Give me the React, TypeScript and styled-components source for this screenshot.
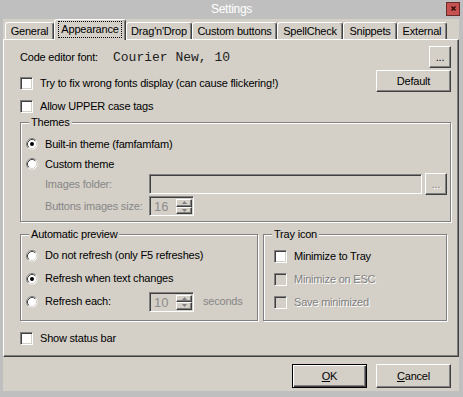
import React from "react";
import styled, { createGlobalStyle, css } from "styled-components";

const GlobalStyle = createGlobalStyle`
  *, *::before, *::after { box-sizing: border-box; }
  html, body { margin: 0; padding: 0; background: #bfbfbf; }
  body {
    font-family: "Liberation Sans", Arial, sans-serif;
    font-size: 11px;
    letter-spacing: -0.2px;
    color: #000;
  }
`;

const face = "#d4d0c8";

const raised = css`
  border: 1px solid;
  border-color: #fff #404040 #404040 #fff;
  box-shadow: inset -1px -1px #808080;
`;

const sunken = css`
  border: 1px solid;
  border-color: #808080 #fff #fff #808080;
  box-shadow: inset 1px 1px #404040, inset -1px -1px ${face};
`;

const tabs = [
  { label: "General", width: 49 },
  { label: "Appearance", width: 72, active: true },
  { label: "Drag'n'Drop", width: 66 },
  { label: "Custom buttons", width: 85 },
  { label: "SpellCheck", width: 66 },
  { label: "Snippets", width: 54 },
  { label: "External", width: 50 },
];

const CheckBox: React.FC<{ disabled?: boolean }> = ({ disabled }) => (
  <CheckBoxBox $disabled={disabled} />
);

const Radio: React.FC<{ checked?: boolean }> = ({ checked }) => (
  <svg width="12" height="12" viewBox="0 0 12 12">
    <circle cx="6" cy="6" r="5.5" fill="#fff" />
    <path d="M2.11 9.89 A5.5 5.5 0 0 1 9.89 2.11" fill="none" stroke="#808080" />
    <path d="M2.82 9.18 A4.5 4.5 0 0 1 9.18 2.82" fill="none" stroke="#404040" />
    <path d="M9.18 2.82 A4.5 4.5 0 0 1 2.82 9.18" fill="none" stroke={face} />
    {checked && <circle cx="6" cy="6" r="2" fill="#000" />}
  </svg>
);

type OptionProps = {
  kind: "check" | "radio";
  label: string;
  checked?: boolean;
  disabled?: boolean;
  height?: number;
  offset?: number;
};

const Option: React.FC<OptionProps> = ({ kind, label, checked, disabled, height, offset }) => (
  <OptionRow $h={height ?? 17} $offset={offset ?? 0}>
    {kind === "check" ? <CheckBox disabled={disabled} /> : <Radio checked={checked} />}
    <OptionText $disabled={disabled}>{label}</OptionText>
  </OptionRow>
);

const Arrow: React.FC<{ up?: boolean }> = ({ up }) => (
  <svg width="5" height="3" viewBox="0 0 5 3">
    <polygon points={up ? "2.5,0 5,3 0,3" : "0,0 5,0 2.5,3"} fill="#808080" />
  </svg>
);

const SpinBox: React.FC<{ value: string }> = ({ value }) => (
  <Spin>
    <SpinValue>{value}</SpinValue>
    <SpinButtons>
      <SpinButton>
        <Arrow up />
      </SpinButton>
      <SpinButton>
        <Arrow />
      </SpinButton>
    </SpinButtons>
  </Spin>
);

const App: React.FC = () => {
  return (
    <>
      <GlobalStyle />
      <Window>
        <TitleBar>
          <span />
          <Title>Settings</Title>
          <CloseButton>
            <svg width="5" height="5" viewBox="0 0 5 5">
              <path d="M0.5 0.5 L4.5 4.5 M4.5 0.5 L0.5 4.5" stroke="#2a0a0a" strokeWidth="1.3" />
            </svg>
          </CloseButton>
        </TitleBar>

        <Client>
          <TabRow>
            {tabs.map((tab) => (
              <Tab key={tab.label} $width={tab.width} $active={tab.active}>
                {tab.active ? <FocusLabel>{tab.label}</FocusLabel> : tab.label}
              </Tab>
            ))}
          </TabRow>

          <Panel>
            <FontRow>
              <FontLabel>Code editor font:</FontLabel>
              <FontName>Courier New, 10</FontName>
              <Spacer />
              <Button $w={22} $h={22}>...</Button>
            </FontRow>

            <DefaultRow>
              <Option kind="check" label="Try to fix wrong fonts display (can cause flickering!)" offset={4} />
              <Button $w={75} $h={22}>Default</Button>
            </DefaultRow>

            <Stack $top={6}>
              <Option kind="check" label="Allow UPPER case tags" />
            </Stack>

            <Group $top={1}>
              <Legend>Themes</Legend>
              <GroupBody $pad="5px 3px 5px 5px">
                <Option kind="radio" label="Built-in theme (famfamfam)" checked height={20} />
                <Option kind="radio" label="Custom theme" height={20} />
                <FieldRow>
                  <FieldLabel>Images folder:</FieldLabel>
                  <TextBox />
                  <Button $w={22} $h={22} $disabled>...</Button>
                </FieldRow>
                <FieldRow $top={2}>
                  <FieldLabel>Buttons images size:</FieldLabel>
                  <SpinBox value="16" />
                </FieldRow>
              </GroupBody>
            </Group>

            <Columns>
              <Group $width={238}>
                <Legend>Automatic preview</Legend>
                <GroupBody $pad="3px 3px 7px 5px">
                  <Option kind="radio" label="Do not refresh (only F5 refreshes)" height={23} />
                  <Option kind="radio" label="Refresh when text changes" checked height={23} />
                  <FieldRow $h={23} $indent={0}>
                    <RadioLabel>
                      <Radio />
                      <OptionText>Refresh each:</OptionText>
                    </RadioLabel>
                    <SpinBox value="10" />
                    <Units>seconds</Units>
                  </FieldRow>
                </GroupBody>
              </Group>

              <Group $grow>
                <Legend>Tray icon</Legend>
                <GroupBody $pad="4px 3px 6px 10px">
                  <Option kind="check" label="Minimize to Tray" height={23} />
                  <Option kind="check" label="Minimize on ESC" disabled height={23} />
                  <Option kind="check" label="Save minimized" disabled height={23} />
                </GroupBody>
              </Group>
            </Columns>

            <Stack $top={9}>
              <Option kind="check" label="Show status bar" />
            </Stack>
          </Panel>

          <Footer>
            <Button $w={75} $h={24} $default>
              <u>O</u>K
            </Button>
            <Button $w={75} $h={24}>
              <u>C</u>ancel
            </Button>
          </Footer>
        </Client>
      </Window>
    </>
  );
};

export default App;

const Window = styled.div`
  width: 463px;
  height: 397px;
  background: #bfbfbf;
  display: flex;
  flex-direction: column;
  overflow: hidden;
`;

const TitleBar = styled.div`
  height: 19px;
  display: grid;
  grid-template-columns: 1fr auto 1fr;
  align-items: center;
`;

const Title = styled.span`
  color: #fff;
  font-size: 12px;
  letter-spacing: -0.3px;
  line-height: 14px;
  padding-bottom: 2px;
`;

const CloseButton = styled.div`
  justify-self: end;
  margin-right: 3px;
  margin-bottom: 2px;
  width: 14px;
  height: 14px;
  background: #c75050;
  border: 1px solid #6a2b2b;
  display: flex;
  align-items: center;
  justify-content: center;
`;

const Client = styled.div`
  flex: 1;
  margin: 0 4px 6px 3px;
  background: ${face};
  display: flex;
  flex-direction: column;
`;

const TabRow = styled.div`
  height: 20px;
  display: flex;
  align-items: flex-end;
  padding-left: 2px;
`;

const Tab = styled.div<{ $width: number; $active?: boolean }>`
  width: ${({ $width }) => $width}px;
  height: ${({ $active }) => ($active ? 21 : 17)}px;
  margin-bottom: ${({ $active }) => ($active ? -1 : 0)}px;
  position: relative;
  z-index: ${({ $active }) => ($active ? 2 : 1)};
  background: ${face};
  border: 1px solid;
  border-bottom: none;
  border-color: #fff #404040 transparent #fff;
  border-radius: 3px 3px 0 0;
  box-shadow: inset -1px 0 #808080;
  display: flex;
  align-items: ${({ $active }) => ($active ? "flex-start" : "center")};
  justify-content: center;
  padding-top: ${({ $active }) => ($active ? 2 : 1)}px;
  line-height: 13px;
  white-space: nowrap;
`;

const FocusLabel = styled.span`
  outline: 1px dotted #000;
  padding: 1px 2px;
`;

const Panel = styled.div`
  flex: 1;
  display: flex;
  flex-direction: column;
  border: 1px solid;
  border-color: #fff #404040 #404040 #fff;
  box-shadow: inset -1px -1px #808080;
  padding: 6px 7px 0 16px;
`;

const FontRow = styled.div`
  height: 22px;
  display: flex;
  align-items: center;
`;

const FontLabel = styled.span`
  width: 93px;
  line-height: 13px;
`;

const FontName = styled.span`
  font-family: "Liberation Mono", "Courier New", monospace;
  font-size: 13px;
  letter-spacing: 0;
  line-height: 15px;
  padding-top: 1px;
  color: #202020;
`;

const Spacer = styled.div`
  flex: 1;
`;

const DefaultRow = styled.div`
  height: 22px;
  margin-top: 2px;
  display: flex;
  align-items: center;
  justify-content: space-between;
`;

const Stack = styled.div<{ $top: number }>`
  margin-top: ${({ $top }) => $top}px;
`;

const Button = styled.div<{ $w: number; $h: number; $default?: boolean; $disabled?: boolean }>`
  width: ${({ $w }) => $w}px;
  height: ${({ $h }) => $h}px;
  flex: none;
  background: ${face};
  display: flex;
  align-items: center;
  justify-content: center;
  line-height: 13px;
  color: ${({ $disabled }) => ($disabled ? "#808080" : "#000")};
  text-shadow: ${({ $disabled }) => ($disabled ? "1px 1px #fff" : "none")};
  ${raised}
  ${({ $default }) =>
    $default &&
    css`
      border: 1px solid #000;
      box-shadow: inset 1px 1px #fff, inset -1px -1px #404040, inset -2px -2px #808080;
    `}
`;

const OptionRow = styled.div<{ $h: number; $offset: number }>`
  height: ${({ $h }) => $h}px;
  margin-top: ${({ $offset }) => $offset}px;
  display: flex;
  align-items: center;
  gap: 7px;
`;

const OptionText = styled.span<{ $disabled?: boolean }>`
  line-height: 13px;
  white-space: nowrap;
  color: ${({ $disabled }) => ($disabled ? "#808080" : "#000")};
  text-shadow: ${({ $disabled }) => ($disabled ? "1px 1px #fff" : "none")};
`;

const CheckBoxBox = styled.span<{ $disabled?: boolean }>`
  width: 13px;
  height: 13px;
  flex: none;
  background: ${({ $disabled }) => ($disabled ? face : "#fff")};
  ${sunken}
`;

const Group = styled.fieldset<{ $top?: number; $width?: number; $grow?: boolean }>`
  margin: ${({ $top }) => $top ?? 0}px 0 0 0;
  padding: 0;
  min-width: 0;
  width: ${({ $width }) => ($width ? `${$width}px` : "auto")};
  flex: ${({ $grow }) => ($grow ? 1 : "none")};
  border: 1px solid #808080;
  box-shadow: 1px 1px 0 #fff, inset 1px 1px 0 #fff;
`;

const Legend = styled.legend`
  margin-left: 8px;
  padding: 0 2px;
  line-height: 13px;
  background: ${face};
`;

const GroupBody = styled.div<{ $pad: string }>`
  padding: ${({ $pad }) => $pad};
  display: flex;
  flex-direction: column;
`;

const FieldRow = styled.div<{ $top?: number; $h?: number; $indent?: number }>`
  height: ${({ $h }) => $h ?? 20}px;
  margin-top: ${({ $top }) => $top ?? 0}px;
  padding-left: ${({ $indent }) => $indent ?? 19}px;
  display: flex;
  align-items: center;
  gap: 3px;
`;

const FieldLabel = styled.span`
  width: 101px;
  flex: none;
  white-space: nowrap;
  line-height: 13px;
  color: #868686;
`;

const RadioLabel = styled.span`
  width: 120px;
  flex: none;
  display: flex;
  align-items: center;
  gap: 7px;
`;

const TextBox = styled.div`
  flex: 1;
  height: 20px;
  background: ${face};
  ${sunken}
`;

const Spin = styled.div`
  width: 45px;
  height: 20px;
  display: flex;
  padding: 2px 1px 1px 2px;
  background: ${face};
  ${sunken}
`;

const SpinValue = styled.span`
  flex: 1;
  font-size: 13px;
  line-height: 16px;
  padding-left: 2px;
  letter-spacing: 0;
  color: #8c8c8c;
`;

const SpinButtons = styled.div`
  width: 16px;
  display: flex;
  flex-direction: column;
`;

const SpinButton = styled.div`
  flex: 1;
  background: ${face};
  display: flex;
  align-items: center;
  justify-content: center;
  ${raised}
`;

const Units = styled.span`
  margin-left: 6px;
  line-height: 13px;
  color: #868686;
`;

const Columns = styled.div`
  margin-top: 6px;
  margin-right: 4px;
  display: flex;
  gap: 5px;
  align-items: stretch;
`;

const Footer = styled.div`
  height: 34px;
  display: flex;
  justify-content: flex-end;
  align-items: flex-start;
  gap: 9px;
  padding: 7px 8px 0 0;
`;
